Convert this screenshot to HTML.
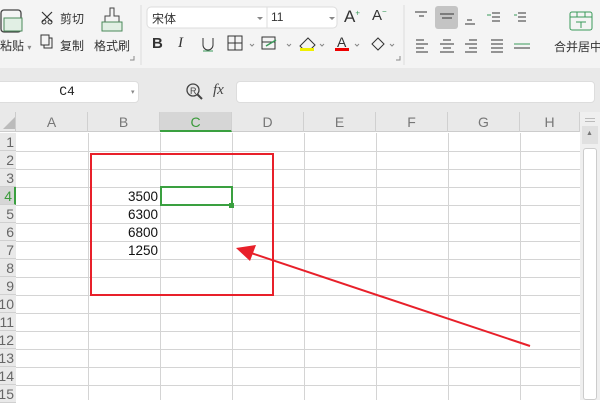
<!DOCTYPE html><html><head><meta charset="utf-8"><style>
*{margin:0;padding:0;box-sizing:border-box}
body{width:600px;height:400px;overflow:hidden;background:#fff;font-family:"Liberation Sans","Noto Sans CJK SC",sans-serif;position:relative}
.a{position:absolute}
.t{font-size:12px;color:#333;white-space:nowrap}
.ch{position:absolute;top:112px;height:20px;width:72px;text-align:center;font-size:14px;color:#777;line-height:20px;border-right:1px solid #d0d0d0}
.rh{position:absolute;left:0;width:16px;height:18px;font-size:14px;color:#666;line-height:18px;text-align:right;padding-right:2px;border-bottom:1px solid #d0d0d0;background:#e9e9e9;overflow:hidden;direction:rtl}
.num{position:absolute;left:88px;width:70px;text-align:right;font-family:"Liberation Sans",sans-serif;font-size:13.5px;color:#111;line-height:18px}
</style></head><body>
<div class="a" style="left:0;top:0;width:600px;height:68px;background:#f4f4f4;box-shadow:0 1px 3px #ccc"></div>
<div class="a" style="left:0;top:68px;width:600px;height:44px;background:#e9e9e9"></div>
<svg class="a" style="left:0;top:0" width="600" height="68">
<rect x="1" y="10" width="20" height="22" rx="3" fill="none" stroke="#444" stroke-width="1.3"/><rect x="4" y="18" width="18" height="13" fill="#e1efe4" stroke="#4a8a5a"/>
<path d="M42 12l10 10M52 12l-10 10" stroke="#333" stroke-width="1.2"/><circle cx="44" cy="22" r="2" fill="none" stroke="#333"/><circle cx="50" cy="22" r="2" fill="none" stroke="#333"/>
<rect x="44" y="38" width="8" height="10" fill="none" stroke="#333"/><rect x="41" y="35" width="8" height="10" fill="#f4f4f4" stroke="#333"/>
<path d="M110 8h4v8h5v6h-14v-6h5z" fill="none" stroke="#444"/><rect x="102" y="22" width="20" height="9" fill="#e1efe4" stroke="#4a8a5a"/>
<line x1="141" y1="5" x2="141" y2="65" stroke="#ddd"/><line x1="404" y1="5" x2="404" y2="65" stroke="#ddd"/>
<rect x="147" y="7" width="190" height="21" rx="4" fill="#fff" stroke="#ddd"/><line x1="267" y1="7" x2="267" y2="28" stroke="#ddd"/>
<path d="M257 17l3 3 3-3zM329 17l3 3 3-3z" fill="#888"/>
<path d="M203 38v7a5 5 0 0 0 10 0v-7" fill="none" stroke="#333"/><line x1="203" y1="51" x2="213" y2="51" stroke="#3a9a5a"/>
<rect x="228" y="36" width="14" height="14" fill="none" stroke="#333"/><path d="M235 36v14M228 43h14" stroke="#333"/>
<rect x="262" y="37" width="13" height="12" fill="none" stroke="#333"/><path d="M262 42h13" stroke="#333"/><path d="M266 46l10-6" stroke="#3a9a5a" stroke-width="1.5"/>
<path d="M300 46l8-8 7 7-4 4h-8z" fill="none" stroke="#333"/><rect x="300" y="48" width="14" height="3" fill="#f0f000"/>
<rect x="335" y="48" width="14" height="3" fill="#e00"/><path d="M372 44l6-6 6 6-6 6z" fill="none" stroke="#333"/>
<path d="M250 44l2 2 2-2M287 44l2 2 2-2M320 44l2 2 2-2M355 44l2 2 2-2M390 44l2 2 2-2" fill="none" stroke="#888"/>
<rect x="435" y="6" width="23" height="23" rx="3" fill="#c4c4c4"/>
<g stroke="#333" stroke-width="1.1"><path d="M415 12h12M419 16h5M440 14h14M442 18h10M467 20h5M465 24h10M416 40h8M416 44h12M416 48h8M416 52h12M443 40h8M440 44h14M443 48h8M440 52h14M469 40h8M465 44h12M469 48h8M465 52h12M491 40h12M491 44h12M491 48h12M491 52h12M514 48h16M492 13h8M492 17h8M492 21h8M518 13h8M518 17h8M518 21h8"/></g>
<path d="M487 15h4M514 15h3M514 44h16" stroke="#3a9a5a"/>
<rect x="570" y="12" width="22" height="18" rx="2" fill="none" stroke="#3a9a5a"/><path d="M570 17h22M577 12v5M585 12v5M576 22h10M581 22v6" stroke="#3a9a5a"/>
<path d="M130 60h4v-4" fill="none" stroke="#888"/><path d="M396 60h4v-4" fill="none" stroke="#888"/>
</svg>
<div class="a t" style="left:152px;top:35px;font-size:15px;font-weight:bold">B</div>
<div class="a t" style="left:178px;top:35px;font-size:15px;font-style:italic;font-family:'Liberation Serif',serif">I</div>
<div class="a t" style="left:0;top:37px;font-size:12px">粘贴 <span style="font-size:8px;color:#888">▾</span></div>
<div class="a t" style="left:60px;top:10px">剪切</div><div class="a t" style="left:60px;top:37px">复制</div>
<div class="a t" style="left:94px;top:37px">格式刷</div>
<div class="a t" style="left:152px;top:10px;font-size:12px">宋体</div><div class="a t" style="left:271px;top:10px;font-size:12px">11</div>
<div class="a t" style="left:344px;top:7px;font-size:17px">A<sup style="font-size:8px;color:#3a9a5a">+</sup></div>
<div class="a t" style="left:372px;top:7px;font-size:15px">A<sup style="font-size:8px;color:#3a9a5a">−</sup></div>
<div class="a t" style="left:337px;top:34px;font-size:14px">A</div>
<div class="a t" style="left:554px;top:38px">合并居中</div>
<div class="a" style="left:-5px;top:81px;width:144px;height:22px;background:#fff;border:1px solid #ddd;border-radius:4px;font-family:'Liberation Mono',monospace;font-size:13px;text-align:center;line-height:20px;color:#222">C4</div>
<div class="a" style="left:131px;top:88px;font-size:7px;color:#888">▾</div>
<svg class="a" style="left:185px;top:82px" width="20" height="20"><circle cx="8" cy="8" r="6" fill="none" stroke="#444" stroke-width="1.3"/><path d="M12 12l5 5" stroke="#444" stroke-width="2"/><text x="5" y="12" font-size="9" fill="#444" font-family="Liberation Sans">R</text></svg>
<div class="a" style="left:213px;top:82px;font-size:15px;font-style:italic;color:#444;font-family:'Liberation Serif',serif">fx</div>
<div class="a" style="left:236px;top:81px;width:359px;height:22px;background:#fff;border:1px solid #ddd;border-radius:4px"></div>
<div class="a" style="left:0;top:112px;width:580px;height:20px;background:#e9e9e9;border-bottom:1px solid #ccc"></div>
<div class="a" style="left:0;top:112px;width:16px;height:20px;border-right:1px solid #ccc"></div>
<svg class="a" style="left:3px;top:117px" width="12" height="12"><path d="M12 0v12h-12z" fill="#bbb"/></svg>
<div class="ch" style="left:16px">A</div><div class="ch" style="left:88px">B</div>
<div class="ch" style="left:160px;background:#d6d6d6;color:#3a9a3a;border-bottom:2px solid #3aa040">C</div>
<div class="ch" style="left:232px">D</div><div class="ch" style="left:304px">E</div><div class="ch" style="left:376px">F</div><div class="ch" style="left:448px">G</div><div class="ch" style="left:520px;width:60px">H</div>
<svg class="a" style="left:0;top:133px" width="580" height="267">
<g stroke="#d4d4d4" stroke-width="1">
<path d="M88.5 0v267M160.5 0v267M232.5 0v267M304.5 0v267M376.5 0v267M448.5 0v267M520.5 0v267"/>
<path d="M16 18.5h564M16 36.5h564M16 54.5h564M16 72.5h564M16 90.5h564M16 108.5h564M16 126.5h564M16 144.5h564M16 162.5h564M16 180.5h564M16 198.5h564M16 216.5h564M16 234.5h564M16 252.5h564"/>
</g></svg>
<div class="a" style="left:0;top:133px;width:16px;height:267px;background:#e9e9e9;border-right:1px solid #ccc"></div>
<div class="rh" style="top:133px">1</div><div class="rh" style="top:151px">2</div><div class="rh" style="top:169px">3</div>
<div class="rh" style="top:187px;background:#d6d6d6;color:#3a9a3a;border-right:2px solid #3aa040">4</div>
<div class="rh" style="top:205px">5</div><div class="rh" style="top:223px">6</div><div class="rh" style="top:241px">7</div><div class="rh" style="top:259px">8</div><div class="rh" style="top:277px">9</div><div class="rh" style="top:295px">10</div><div class="rh" style="top:313px">11</div><div class="rh" style="top:331px">12</div><div class="rh" style="top:349px">13</div><div class="rh" style="top:367px">14</div><div class="rh" style="top:385px">15</div>
<div class="num" style="top:188px">3500</div><div class="num" style="top:206px">6300</div><div class="num" style="top:224px">6800</div><div class="num" style="top:242px">1250</div>
<div class="a" style="left:160px;top:186px;width:73px;height:20px;border:2px solid #3aa040"></div>
<div class="a" style="left:229px;top:203px;width:5px;height:5px;background:#3aa040"></div>
<div class="a" style="left:580px;top:112px;width:20px;height:288px;background:#efefef"></div>
<div class="a" style="left:585px;top:118px;width:10px;height:1px;background:#bbb"></div><div class="a" style="left:585px;top:121px;width:10px;height:1px;background:#bbb"></div>
<div class="a" style="left:582px;top:126px;width:16px;height:18px;background:#e0e0e0"></div>
<div class="a" style="left:586px;top:130px;font-size:7px;color:#777">▲</div>
<div class="a" style="left:583px;top:148px;width:14px;height:252px;background:#fff;border:1px solid #ccc;border-radius:3px"></div>
<svg class="a" style="left:0;top:0" width="600" height="400">
<rect x="91" y="154" width="182" height="141" fill="none" stroke="#e8202a" stroke-width="2"/>
<line x1="530" y1="346" x2="248" y2="252" stroke="#e8202a" stroke-width="2"/>
<path d="M236 248l20-3-6 16z" fill="#e8202a"/>
</svg>
</body></html>
